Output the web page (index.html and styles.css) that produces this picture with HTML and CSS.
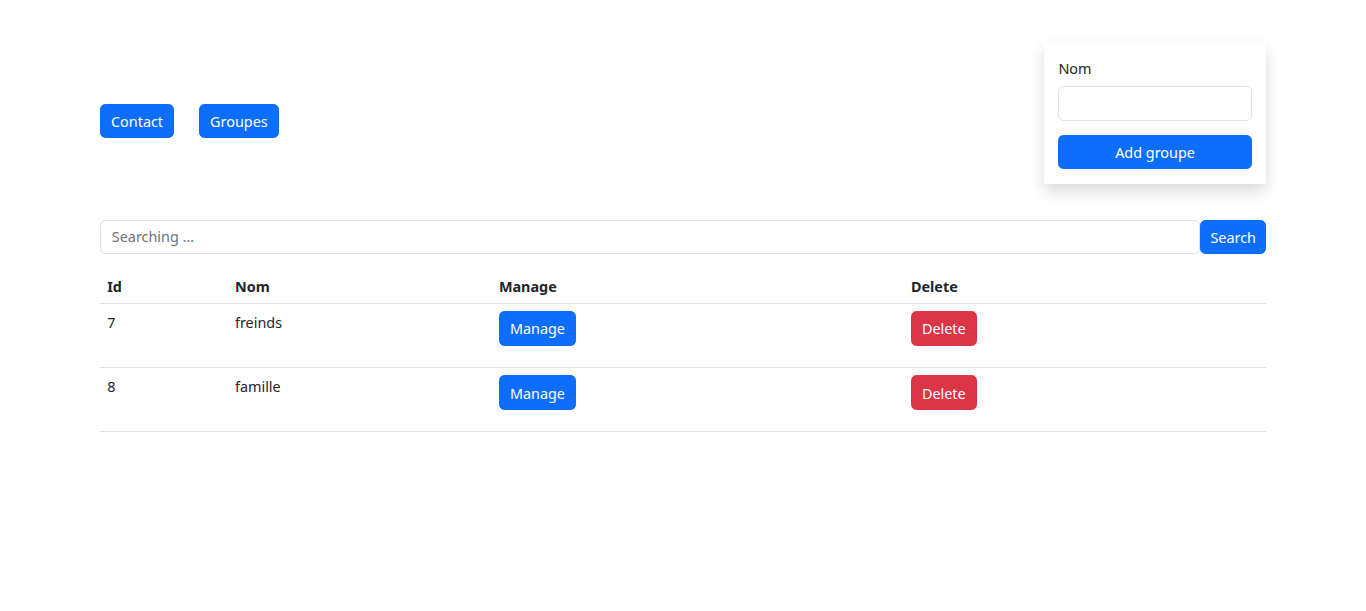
FILE: index.html
```html
<!DOCTYPE html>
<html lang="fr">
<head>
    <meta charset="UTF-8">
    <title>Groupes</title>
    <meta name="viewport" content="width=device-width, initial-scale=1">
    <link rel="stylesheet" href="styles.css">
</head>
<body>
    <div class="container">
        <div class="top">
            <nav class="nav">
                <button class="btn btn-primary">Contact</button>
                <button class="btn btn-primary">Groupes</button>
            </nav>
            <form class="card" onsubmit="return false">
                <label for="nom">Nom</label>
                <input id="nom" class="form-control" type="text">
                <button class="btn btn-primary btn-block">Add groupe</button>
            </form>
        </div>

        <div class="search">
            <input class="form-control" type="text" placeholder="Searching ...">
            <button class="btn btn-primary">Search</button>
        </div>

        <table class="table">
            <thead>
                <tr>
                    <th class="col-id">Id</th>
                    <th class="col-nom">Nom</th>
                    <th class="col-manage">Manage</th>
                    <th>Delete</th>
                </tr>
            </thead>
            <tbody>
                <tr>
                    <td>7</td>
                    <td>freinds</td>
                    <td><form class="cell-form"><button type="button" class="btn btn-primary">Manage</button></form></td>
                    <td><form class="cell-form"><button type="button" class="btn btn-danger">Delete</button></form></td>
                </tr>
                <tr>
                    <td>8</td>
                    <td>famille</td>
                    <td><form class="cell-form"><button type="button" class="btn btn-primary">Manage</button></form></td>
                    <td><form class="cell-form"><button type="button" class="btn btn-danger">Delete</button></form></td>
                </tr>
            </tbody>
        </table>
    </div>
</body>
</html>
```

FILE: styles.css
```css
body { margin: 0; font-family: "Segoe UI", "Noto Sans", "Liberation Sans", sans-serif; font-size: 14.4px; line-height: 1.5; color: #212529; background: #fff; }
.container { width: 1166px; margin: 0 auto; padding-top: 43px; }
.top { display: flex; justify-content: space-between; align-items: flex-start; }
.nav { display: flex; gap: 25px; margin-top: 61px; }
.btn { font-family: inherit; font-size: 14.4px; line-height: 1.5; padding: 6.2px 10px 4.6px; border: 1px solid transparent; border-radius: 5.4px; color: #fff; cursor: pointer; }
.btn-primary { background: #0d6efd; border-color: #0d6efd; }
.btn-danger { background: #dc3545; border-color: #dc3545; }
.card { width: 222px; box-sizing: border-box; padding: 14.4px; background: #fff; box-shadow: 0 7.2px 14.4px rgba(0,0,0,0.15); display: flex; flex-direction: column; }
.card label { padding-top: 1px; margin-bottom: 6.2px; }
.card .form-control { margin-bottom: 14.4px; }
.btn-block { width: 100%; }
.form-control { font-family: inherit; font-size: 14.4px; line-height: 1.5; padding: 5.4px 10.8px; border: 1px solid #dee2e6; border-radius: 5.4px; color: #212529; background: #fff; box-sizing: border-box; width: 100%; outline: none; }
.form-control::placeholder { color: #6c757d; }
.search { display: flex; margin-top: 36px; margin-bottom: 13px; }
.search .form-control { flex: 1; }
.search .btn { padding: 6.2px 9px 4.6px; }
.table { width: 100%; border-collapse: collapse; }
.table th, .table td { padding: 7.2px; text-align: left; vertical-align: top; border-bottom: 1px solid #dee2e6; }
.table th { font-weight: bold; padding-top: 9.2px; padding-bottom: 5.2px; }
.table td { padding-top: 8px; padding-bottom: 6.4px; }
.col-id { width: 113.4px; }
.col-nom { width: 249.6px; }
.col-manage { width: 397.6px; }
.cell-form { margin: -0.8px 0 15.2px; }
```
